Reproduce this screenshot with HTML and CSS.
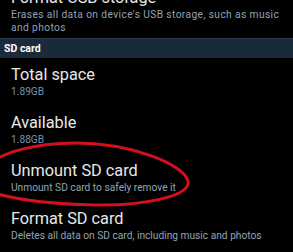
FILE: index.html
```html
<!DOCTYPE html>
<html lang="en">
<head>
<meta charset="UTF-8">
<meta name="viewport" content="width=device-width, initial-scale=1.0">
<title>Storage</title>
<link rel="stylesheet" href="styles.css">
</head>
<body>
<div class="screen">
    <div class="item item-top">
        <div class="title">Format USB storage</div>
        <div class="summary">Erases all data on device's USB storage, such as music<br>and photos</div>
    </div>

    <div class="category">SD card</div>

    <div class="item">
        <div class="title">Total space</div>
        <div class="summary size">1.89GB</div>
    </div>
    <div class="item">
        <div class="title">Available</div>
        <div class="summary size">1.88GB</div>
    </div>
    <div class="item">
        <div class="title">Unmount SD card</div>
        <div class="summary">Unmount SD card to safely remove it</div>
    </div>
    <div class="item">
        <div class="title">Format SD card</div>
        <div class="summary">Deletes all data on SD card, including music and photos</div>
    </div>

    <!-- hand drawn circle -->
    <svg class="mark" width="293" height="252" viewBox="0 0 293 252">
        <path d="M -15 168 C 0 151, 40 143, 75 143 C 130 143, 184 164, 188 181 C 191 197, 140 206, 95 205 C 50 204, 12 200, -15 190 Z"
              fill="none" stroke="#d4101c" stroke-width="3"/>
    </svg>
</div>
</body>
</html>
```

FILE: styles.css
```css
body {
    margin: 0;
    padding: 0;
    background-color: #000;
    font-family: Roboto, "Noto Sans", sans-serif;
    overflow: hidden;
}

.screen {
    position: relative;
    width: 293px;
    height: 252px;
    overflow: hidden;
}

.item {
    padding: 8px 11px 7.5px;
}

.item-top {
    margin-top: -11px;
    padding-top: 0;
    padding-right: 4px;
    padding-bottom: 4px;
}

.item-top .summary {
    letter-spacing: 0.4px;
}

.title {
    font-size: 16.3px;
    line-height: 18px;
    color: #e8e8e8;
}

.summary {
    margin-top: 2px;
    font-size: 10.2px;
    line-height: 12.5px;
    color: #93a4b6;
}

.size {
    color: #7693b2;
}

.category {
    height: 20px;
    line-height: 20px;
    padding-left: 4px;
    background-color: #1b2a3a;
    border-top: 1px solid #2a3a4b;
    box-sizing: border-box;
    color: #fff;
    font-size: 10.5px;
    font-weight: bold;
}

.mark {
    position: absolute;
    left: 0;
    top: 0;
}
```
